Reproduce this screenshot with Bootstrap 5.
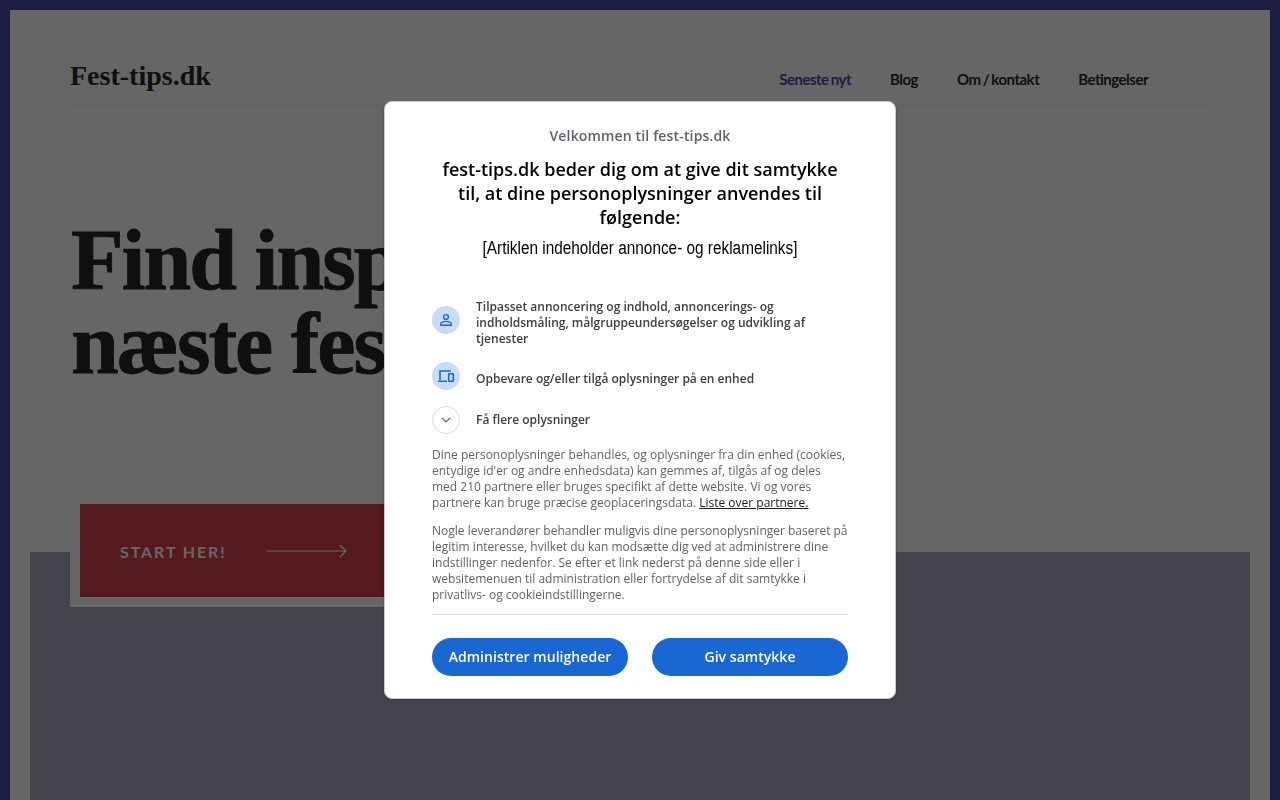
<!DOCTYPE html>
<html lang="da">
<head>
<meta charset="utf-8">
<title>Fest-tips.dk</title>
<link href="https://cdn.jsdelivr.net/npm/bootstrap@5.3.0/dist/css/bootstrap.min.css" rel="stylesheet">
<style>
html,body{height:100%;overflow:hidden}
body{background:#fff;border:10px solid #4b4ba5;border-bottom:0;font-family:"Lato",sans-serif;color:#2a2a2a}
.site-wrap{height:790px;overflow:hidden}
.site-head{margin:0 60px;height:96px;border-bottom:1px solid #ececec;padding-top:48px}
.brand-name{font-family:"Liberation Serif",serif;font-weight:700;font-size:28px;line-height:36px;color:#2a2a2a;margin:0}
.top-links{gap:39px;margin-right:62px;padding-top:11px}
.top-links a{font-family:"Lato",sans-serif;font-weight:700;font-size:15px;line-height:20px;letter-spacing:-.5px;word-spacing:-1px;color:#2a2a2a;text-decoration:none}
.top-links a.on{color:#4b4ba5}
.hero-title{font-family:"Liberation Serif",serif;font-weight:700;font-size:86px;line-height:84px;letter-spacing:-2px;-webkit-text-stroke:.8px #26262f;color:#26262f;margin:112px 0 0 61px;width:830px}
.start-box{margin:108px 0 0 60px;border:10px solid #fff;background:#d5414b;width:340px;height:113px;padding:2px 40px 0;position:relative;z-index:1;gap:40px;font-weight:700;font-size:16px;letter-spacing:1.9px;color:#fff}
.panel-blue{margin:-55px 20px 0;height:300px;background:#aaaac6}
.dim-layer{position:fixed;inset:0;background:rgba(0,0,0,.6);z-index:10}
.consent-box{position:fixed;z-index:11;left:384px;top:101px;width:512px;height:598px;background:#fff;border:1px solid #ccc;border-radius:8px;padding:24px 47px 0;font-family:"Open Sans",sans-serif;box-shadow:0 1px 3px rgba(0,0,0,.3)}
.consent-welcome{font-size:14px;font-weight:600;line-height:20px;letter-spacing:.15px;color:#5f6368;margin:0 0 11px;text-align:center}
.consent-head{font-size:18px;font-weight:600;line-height:24px;color:#000;text-align:center;margin:0 0 7px}
.consent-note{font-family:"Liberation Sans",sans-serif;font-size:18px;line-height:24px;color:#000;text-align:center;margin:0 0 34px;white-space:nowrap;transform:scaleX(.853)}
.purpose-row{gap:16px;align-items:center}
.purpose-txt{font-size:12px;font-weight:600;line-height:16px;color:#3c4043}
.txt-low{padding-top:5px;margin-bottom:-1px}
.round-ico{width:28px;height:28px;border-radius:50%;background:#c8dcf6;flex:none}
.round-plain{background:#fff;border:1px solid #dadce0}
.legal-txt{font-size:12px;line-height:16px;color:#5f6368;margin:0 0 12px}
.legal-first{margin-top:13px}
.legal-txt a{color:#202124}
.legal-rule{border-top:1px solid #dadce0;margin-top:11px;padding-top:23px;gap:24px}
.pill-btn{flex:1 1 0;height:38px;border-radius:19px;background:#1967d2;border:0;color:#fff;font-size:14px;font-weight:600;padding:0 0 2px;letter-spacing:.04px}
</style>
</head>
<body>
<div class="site-wrap">
  <header class="site-head d-flex justify-content-between align-items-start">
    <p class="brand-name">Fest-tips.dk</p>
    <nav class="top-links d-flex">
      <a class="on" href="#">Seneste nyt</a>
      <a href="#">Blog</a>
      <a href="#">Om / kontakt</a>
      <a href="#">Betingelser</a>
    </nav>
  </header>
  <h1 class="hero-title">Find inspiration til din<br>næste fest</h1>
  <div class="start-box d-flex align-items-center">
    <span>START HER!</span>
    <svg width="80" height="14" viewBox="0 0 80 14" fill="none" stroke="#fff" stroke-width="1.2"><path d="M0 6H79M73 0l6 6-6 6"/></svg>
  </div>
  <div class="panel-blue"></div>
</div>
<div class="dim-layer"></div>
<div class="consent-box" role="dialog">
  <p class="consent-welcome">Velkommen til fest-tips.dk</p>
  <h2 class="consent-head">fest-tips.dk beder dig om at give dit samtykke til, at dine personoplysninger anvendes til følgende:</h2>
  <p class="consent-note">[Artiklen indeholder annonce- og reklamelinks]</p>
  <div class="d-flex purpose-row">
    <span class="round-ico d-flex align-items-center justify-content-center">
      <svg width="16" height="16" viewBox="0 0 16 16" fill="none" stroke="#1967d2" stroke-width="1.4"><circle cx="8" cy="5" r="2.4"/><path d="M2.8 13.2v-1.4c0-1.4 2.9-2.4 5.2-2.4s5.2 1 5.2 2.4v1.4z"/></svg>
    </span>
    <span class="purpose-txt txt-low">Tilpasset annoncering og indhold, annoncerings- og indholdsmåling, målgruppeundersøgelser og udvikling af tjenester</span>
  </div>
  <div class="d-flex purpose-row mt-3">
    <span class="round-ico d-flex align-items-center justify-content-center">
      <svg width="18" height="18" viewBox="0 0 18 18" fill="none" stroke="#1967d2" stroke-width="1.6"><path d="M3 13V4h11M1 14.2h9"/><rect x="11.7" y="6.7" width="4.6" height="7.6" rx=".6"/></svg>
    </span>
    <span class="purpose-txt txt-low">Opbevare og/eller tilgå oplysninger på en enhed</span>
  </div>
  <div class="d-flex purpose-row mt-3">
    <span class="round-ico round-plain d-flex align-items-center justify-content-center">
      <svg width="12" height="12" viewBox="0 0 12 12" fill="none" stroke="#5f6368" stroke-width="1.2"><path d="M2 4l4 4 4-4"/></svg>
    </span>
    <span class="purpose-txt">Få flere oplysninger</span>
  </div>
  <p class="legal-txt legal-first">Dine personoplysninger behandles, og oplysninger fra din enhed (cookies, entydige id'er og andre enhedsdata) kan gemmes af, tilgås af og deles med 210 partnere eller bruges specifikt af dette website. Vi og vores partnere kan bruge præcise geoplaceringsdata. <a href="#">Liste over partnere.</a></p>
  <p class="legal-txt mb-0">Nogle leverandører behandler muligvis dine personoplysninger baseret på legitim interesse, hvilket du kan modsætte dig ved at administrere dine indstillinger nedenfor. Se efter et link nederst på denne side eller i websitemenuen til administration eller fortrydelse af dit samtykke i privatlivs- og cookieindstillingerne.</p>
  <div class="legal-rule d-flex">
    <button class="pill-btn" type="button">Administrer muligheder</button>
    <button class="pill-btn" type="button">Giv samtykke</button>
  </div>
</div>
<script src="https://cdn.jsdelivr.net/npm/bootstrap@5.3.0/dist/js/bootstrap.bundle.min.js"></script>
</body>
</html>
